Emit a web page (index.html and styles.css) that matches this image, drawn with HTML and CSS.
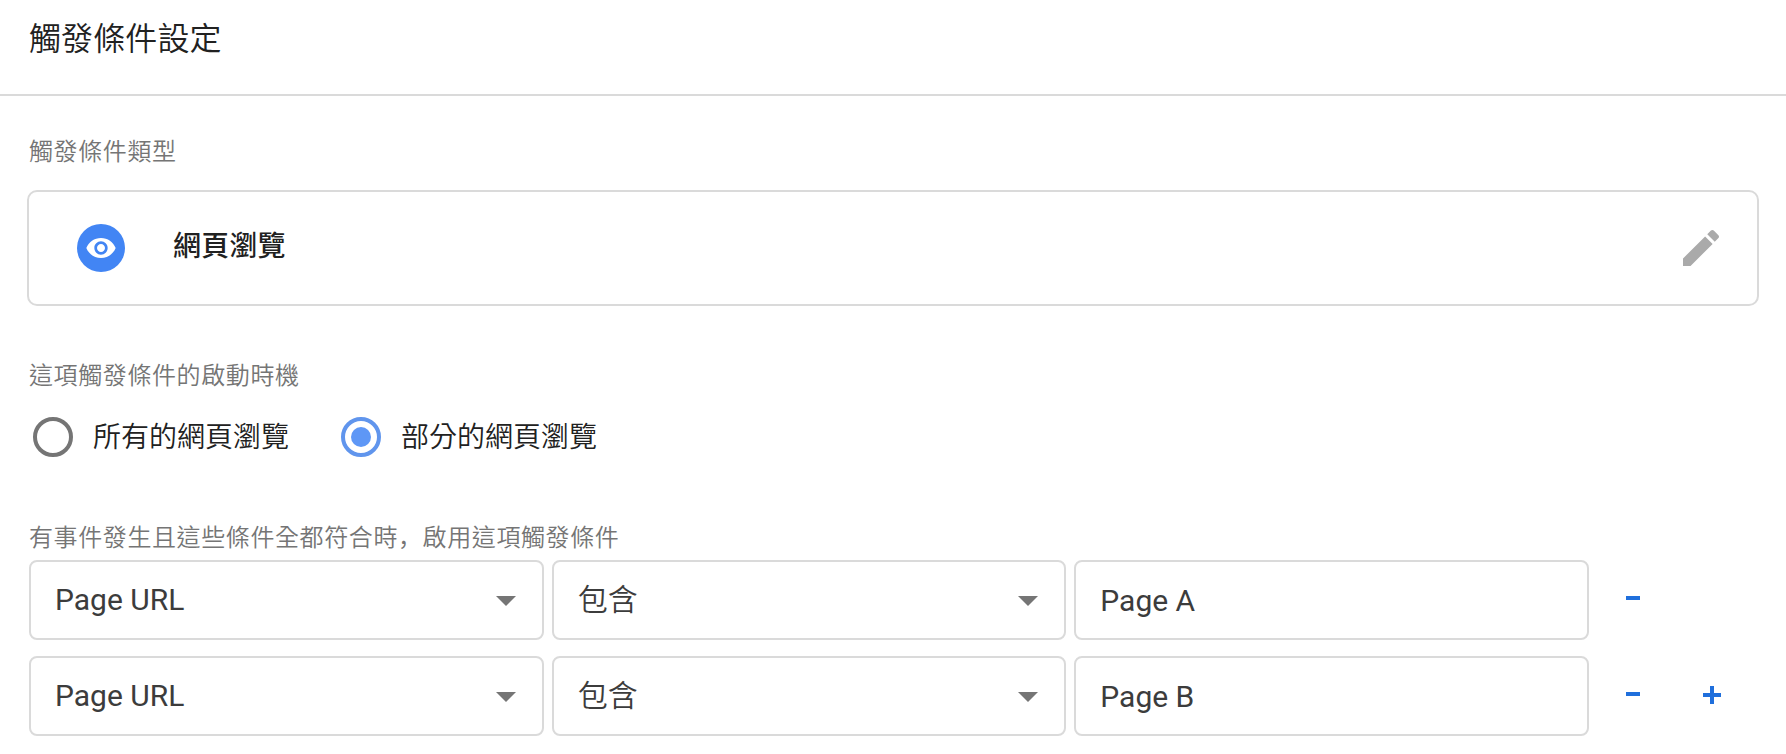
FILE: index.html
```html
<!DOCTYPE html>
<html lang="zh-Hant">
<head>
    <meta charset="UTF-8">
    <title>觸發條件設定</title>
    <meta name="viewport" content="width=device-width,initial-scale=1">
    <link rel="stylesheet" href="styles.css">
</head>
<body>
    <div class="wrap">
        <div class="header">
            <h1 class="title">觸發條件設定</h1>
        </div>
        <div class="content">
            <h2 class="label">觸發條件類型</h2>
            <div class="type-card">
                <span class="type-icon">
                    <svg viewBox="0 0 24 24" width="32" height="32"><path d="M12 4.5C7 4.5 2.73 7.61 1 12c1.73 4.39 6 7.5 11 7.5s9.27-3.11 11-7.5c-1.73-4.39-6-7.5-11-7.5zM12 17c-2.76 0-5-2.24-5-5s2.24-5 5-5 5 2.24 5 5-2.24 5-5 5zm0-8c-1.66 0-3 1.34-3 3s1.34 3 3 3 3-1.34 3-3-1.34-3-3-3z"/></svg>
                </span>
                <span class="type-name">網頁瀏覽</span>
                <svg class="edit-icon" viewBox="0 0 24 24" width="48" height="48"><path d="M3 17.25V21h3.75L17.81 9.94l-3.75-3.75L3 17.25zM20.71 7.04c.39-.39.39-1.02 0-1.41l-2.34-2.34c-.39-.39-1.02-.39-1.41 0l-1.83 1.83 3.75 3.75 1.83-1.83z"/></svg>
            </div>

            <h2 class="label label-timing">這項觸發條件的啟動時機</h2>
            <div class="radio-group">
                <div class="radio"><span class="radio-mark"></span><span class="radio-text">所有的網頁瀏覽</span></div>
                <div class="radio is-checked"><span class="radio-mark"></span><span class="radio-text">部分的網頁瀏覽</span></div>
            </div>

            <h2 class="label label-filter">有事件發生且這些條件全都符合時<span class="comma" lang="zh-Hans">，</span>啟用這項觸發條件</h2>
            <div class="filter-row">
                <div class="field select">Page URL</div>
                <div class="field select is-cjk">包含</div>
                <div class="field text">Page A</div>
                <svg class="btn-minus" viewBox="0 0 14 4" width="14" height="4"><path d="M0 0h14v4H0z"/></svg>
            </div>
            <div class="filter-row">
                <div class="field select">Page URL</div>
                <div class="field select is-cjk">包含</div>
                <div class="field text">Page B</div>
                <svg class="btn-minus" viewBox="0 0 14 4" width="14" height="4"><path d="M0 0h14v4H0z"/></svg>
                <svg class="btn-plus" viewBox="0 0 18 18" width="18" height="18"><path d="M7 0h4v7h7v4h-7v7H7v-7H0V7h7z"/></svg>
            </div>
        </div>
    </div>
</body>
</html>
```
FILE: styles.css
```css
* {box-sizing:border-box;}
html, body {margin:0;}
body {background:#fff;color:#212121;font-family:Roboto, "Noto Sans CJK TC", sans-serif;font-size:28px;}
h1, h2 {margin:0;font-weight:400;}

.header {height:96px;padding:15px 29px 0;border-bottom:2px solid #dadada;}
.title {font-size:32px;font-weight:350;line-height:48px;letter-spacing:.1px;}
.content {padding:0 27px;}

.label {height:36px;margin-left:2px;color:#757575;font-size:24px;font-weight:350;line-height:36px;letter-spacing:.6px;}
.content .label:first-child {margin-top:38px;}
.comma {font-family:"Noto Sans CJK SC", sans-serif;}

.type-card {display:flex;align-items:center;height:116px;margin-top:20px;padding:0 32px 0 48px;border:2px solid #dadada;border-radius:10px;}
.type-icon {display:flex;align-items:center;justify-content:center;width:48px;height:48px;border-radius:50%;background:#4285f4;}
.type-icon svg {fill:#fff;}
.type-name {flex:1;margin-left:48px;padding-bottom:9px;font-weight:500;letter-spacing:.2px;}
.edit-icon {fill:#aaa;}

.label-timing {margin-top:52px;}
.radio-group {display:flex;gap:52px;margin:23px 0 0 6px;}
.radio {display:flex;align-items:center;gap:20px;height:40px;font-weight:350;}
.radio-mark {display:flex;align-items:center;justify-content:center;width:40px;height:40px;border:4px solid #757575;border-radius:50%;}
.radio-text {padding-bottom:5px;}
.radio.is-checked .radio-mark {border-color:#6095ed;}
.radio.is-checked .radio-mark:before {content:"";width:20px;height:20px;border-radius:50%;background:#5e97f6;}

.label-filter {margin-top:61px;}
.filter-row {display:grid;grid-template-columns:repeat(3, 514.67px) 14px 18px;column-gap:8px;align-items:center;height:80px;margin:6px 0 16px 2px;}
.filter-row + .filter-row {margin-top:0;}
.field {display:flex;align-items:center;justify-content:space-between;height:80px;padding:0 26px 2px 24px;border:2px solid #dadada;border-radius:8px;color:#3c3c3c;font-size:30px;}
.field.is-cjk {padding-bottom:6px;font-weight:350;}
.field.text {padding-bottom:0;}
.select:after {content:"";margin-top:4px;border:10px solid transparent;border-top-color:#757575;border-bottom:0;}
.is-cjk:after {margin-top:8px;}
.btn-minus, .btn-plus {fill:#1f6fdc;}
.btn-minus {margin:0 0 4px 29px;}
.btn-plus {margin:0 0 2px 84px;}
```
